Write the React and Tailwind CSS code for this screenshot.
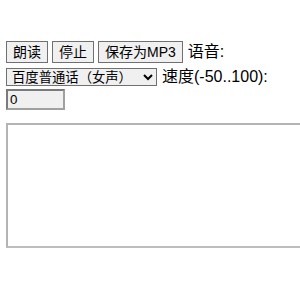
import React, { useState } from 'react';

const font = { fontFamily: '"Liberation Sans", "Noto Sans CJK SC", sans-serif' };

const Btn = ({ children }) => (
  <button className="h-[22px] px-[6px] border border-[#707070] bg-[#f0f0f0] text-[14px] leading-none text-black">
    {children}
  </button>
);

export default function App() {
  const [speed, setSpeed] = useState('0');
  const [voice, setVoice] = useState('0');
  const [text, setText] = useState('');

  return (
    <div className="w-[300px] h-[300px] overflow-hidden bg-white text-black" style={font}>
      <div className="pt-[41px] pl-[6px]">
        <div className="flex items-center gap-[4px] h-[22px]">
          <Btn>朗读</Btn>
          <Btn>停止</Btn>
          <Btn>保存为MP3</Btn>
          <span className="ml-px text-[16px] leading-none">语音:</span>
        </div>
        <div className="flex items-center gap-[5px] mt-[5px] h-[18px]">
          <select
            value={voice}
            onChange={(e) => setVoice(e.target.value)}
            className="w-[151px] h-[18px] border border-[#707070] bg-[#f0f0f0] text-[13.33px] leading-none pl-px"
          >
            <option value="0">百度普通话（女声）</option>
            <option value="1">百度普通话（男声）</option>
          </select>
          <span className="text-[16px] leading-none">速度(-50..100):</span>
        </div>
        <div className="mt-[3px]">
          <input
            value={speed}
            onChange={(e) => setSpeed(e.target.value)}
            className="block w-[59px] h-[21px] border-2 border-t-[#7a7a7a] border-l-[#7a7a7a] border-b-[#a0a0a0] border-r-[#a0a0a0] bg-[#f0f0f0] text-[13.33px] px-[2px] outline-none"
          />
        </div>
        <textarea
          value={text}
          onChange={(e) => setText(e.target.value)}
          className="block mt-[13px] w-[310px] h-[125px] border-2 border-t-[#b4b4b4] border-l-[#b4b4b4] border-b-[#bdbdbd] border-r-[#bdbdbd] bg-white resize-none outline-none"
        />
      </div>
    </div>
  );
}
